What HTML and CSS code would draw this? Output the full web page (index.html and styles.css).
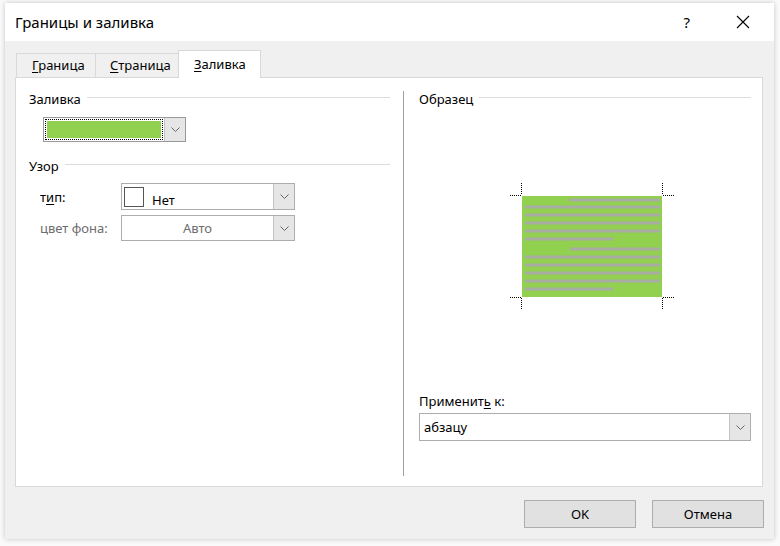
FILE: index.html
```html
<!DOCTYPE html>
<html lang="ru">
<head>
    <meta charset="UTF-8">
    <title>Границы и заливка</title>
    <link rel="stylesheet" href="styles.css">
</head>
<body>
    <div class="window">
        <div class="titlebar">
            <span class="title">Границы и заливка</span>
            <span class="help">?</span>
            <svg class="close" width="14" height="14" viewBox="0 0 14 14">
                <path d="M1 1 L13 13 M13 1 L1 13" stroke="#000" stroke-width="1.1" fill="none"/>
            </svg>
        </div>

        <div class="body">
            <div class="tabs">
                <div class="tab"><u>Г</u>раница</div>
                <div class="tab"><u>С</u>траница</div>
                <div class="tab active"><u>З</u>аливка</div>
            </div>

            <div class="panel">
                <!-- левая колонка -->
                <div class="col-left">
                    <div class="group-head"><span>Заливка</span><i></i></div>
                    <div class="combo combo-color">
                        <div class="combo-value"><div class="swatch"></div></div>
                        <div class="combo-btn">
                            <svg width="9" height="5" viewBox="0 0 9 5"><path d="M0.5 0.5 L4.5 4.5 L8.5 0.5" stroke="#666" fill="none"/></svg>
                        </div>
                    </div>

                    <div class="group-head group-pattern"><span>Узор</span><i></i></div>
                    <div class="row">
                        <label class="row-label">т<u>и</u>п:</label>
                        <div class="combo combo-type">
                            <div class="combo-value"><span class="pattern-box"></span><span>Нет</span></div>
                            <div class="combo-btn">
                                <svg width="9" height="5" viewBox="0 0 9 5"><path d="M0.5 0.5 L4.5 4.5 L8.5 0.5" stroke="#666" fill="none"/></svg>
                            </div>
                        </div>
                    </div>
                    <div class="row">
                        <label class="row-label disabled">цвет фона:</label>
                        <div class="combo combo-bg">
                            <div class="combo-value center disabled">Авто</div>
                            <div class="combo-btn">
                                <svg width="9" height="5" viewBox="0 0 9 5"><path d="M0.5 0.5 L4.5 4.5 L8.5 0.5" stroke="#666" fill="none"/></svg>
                            </div>
                        </div>
                    </div>
                </div>

                <div class="separator"></div>

                <!-- правая колонка -->
                <div class="col-right">
                    <div class="group-head"><span>Образец</span><i></i></div>
                    <div class="preview">
                        <svg width="170" height="146" viewBox="0 0 170 146">
                            <rect x="12" y="13" width="140" height="101" fill="#92d050"/>
                            <g stroke="#a8aca4" stroke-width="3">
                                <line x1="59" y1="17" x2="150" y2="17"/>
                                <line x1="15" y1="24" x2="150" y2="24"/>
                                <line x1="15" y1="32" x2="150" y2="32"/>
                                <line x1="15" y1="40" x2="150" y2="40"/>
                                <line x1="15" y1="48" x2="150" y2="48"/>
                                <line x1="15" y1="56" x2="103" y2="56"/>
                                <line x1="60" y1="66" x2="150" y2="66"/>
                                <line x1="15" y1="74" x2="150" y2="74"/>
                                <line x1="15" y1="82" x2="150" y2="82"/>
                                <line x1="15" y1="90" x2="150" y2="90"/>
                                <line x1="15" y1="98" x2="150" y2="98"/>
                                <line x1="15" y1="106" x2="103" y2="106"/>
                            </g>
                            <g stroke="#000" stroke-width="1" stroke-dasharray="1 1" fill="none">
                                <path d="M11.5 0 V12 M0 12.5 H11"/>
                                <path d="M152.5 0 V12 M153 12.5 H165"/>
                                <path d="M11.5 115 V127 M0 114.5 H11"/>
                                <path d="M152.5 115 V127 M153 114.5 H165"/>
                            </g>
                        </svg>
                    </div>
                    <div class="apply">
                        <label class="apply-label">Применит<u>ь</u> к:</label>
                        <div class="combo combo-apply">
                            <div class="combo-value">абзацу</div>
                            <div class="combo-btn">
                                <svg width="9" height="5" viewBox="0 0 9 5"><path d="M0.5 0.5 L4.5 4.5 L8.5 0.5" stroke="#666" fill="none"/></svg>
                            </div>
                        </div>
                    </div>
                </div>
            </div>

            <div class="footer">
                <button class="btn">OK</button>
                <button class="btn">Отмена</button>
            </div>
        </div>
    </div>
</body>
</html>
```

FILE: styles.css
```css
* {
    margin: 0;
    padding: 0;
    box-sizing: border-box;
}

body {
    font-family: "Noto Sans", "Open Sans", sans-serif;
    font-size: 12px;
    color: #000;
    background: #fafafa;
    width: 780px;
    height: 546px;
    overflow: hidden;
}

u {
    text-decoration-thickness: 1px;
    text-underline-offset: 2px;
}

.window {
    margin: 3px 6px 0 5px;
    width: 769px;
    height: 536px;
    background: #f0f0f0;
    box-shadow: 0 0 5px rgba(0, 0, 0, 0.22);
    display: flex;
    flex-direction: column;
}

.titlebar {
    height: 38px;
    background: #fff;
    display: flex;
    align-items: center;
    padding: 0 24px 0 10px;
}

.title {
    font-size: 15px;
    flex: 1;
}

.help {
    font-size: 15px;
    margin-right: 46px;
}

.body {
    flex: 1;
    padding: 9px 11px 0 10px;
    display: flex;
    flex-direction: column;
}

.tabs {
    display: flex;
    align-items: flex-end;
    height: 27px;
    padding-left: 1px;
}

.tab {
    height: 24px;
    padding: 0 15px;
    border: 1px solid #d9d9d9;
    border-bottom: none;
    border-right: none;
    background: #f0f0f0;
    font-size: 13px;
    line-height: 23px;
}

.tab:nth-child(1) { width: 79px; padding-left: 15px; }
.tab:nth-child(2) { width: 83px; padding-left: 14px; }

.tab.active {
    height: 28px;
    width: 83px;
    background: #fff;
    border-right: 1px solid #d9d9d9;
    line-height: 27px;
    margin-bottom: -1px;
    position: relative;
    padding-left: 15px;
}

.panel {
    height: 410px;
    background: #fff;
    border: 1px solid #d9d9d9;
    display: grid;
    grid-template-columns: 361px 1px 1fr;
    column-gap: 13px;
    padding: 13px 11px 10px 13px;
}

.panel .separator {
    background: #a0a0a0;
}

.col-right {
    margin-left: 2px;
    display: flex;
    flex-direction: column;
}

.group-head {
    display: flex;
    align-items: center;
    height: 16px;
    font-size: 13px;
}

.group-head i {
    flex: 1;
    height: 1px;
    background: #dcdcdc;
    margin: -3px 0 0 6px;
}

.combo {
    display: flex;
    background: #fff;
    border: 1px solid #adadad;
}

.combo-value {
    flex: 1;
    display: flex;
    align-items: center;
    font-size: 13px;
    padding-left: 4px;
}

.combo-value.center {
    justify-content: center;
    padding-left: 0;
}

.combo-btn {
    width: 21px;
    background: #e6e6e6;
    border-left: 1px solid #c4c4c4;
    display: flex;
    align-items: center;
    justify-content: center;
}

.combo-color {
    width: 143px;
    height: 25px;
    margin: 10px 0 0 14px;
    border-color: #999;
}

.combo-color .combo-value {
    padding: 1px;
    border: 1px dotted #000;
    margin: 1px;
}

.swatch {
    width: 100%;
    height: 100%;
    background: #92d050;
}

.group-pattern {
    margin-top: 16px;
}

.row {
    display: flex;
    align-items: center;
    margin-top: 9px;
}

.row + .row {
    margin-top: 5px;
}

.row-label {
    width: 92px;
    padding-left: 11px;
    font-size: 13px;
}

.disabled {
    color: #6d6d6d;
}

.combo-type {
    width: 174px;
    height: 27px;
}

.combo-bg {
    width: 174px;
    height: 26px;
}

.pattern-box {
    width: 20px;
    height: 20px;
    border: 1px solid #555;
    margin-right: 8px;
    margin-left: -2px;
}

.combo-type .combo-value span:last-child {
    margin-top: 6px;
}

.preview {
    flex: 1;
    padding: 76px 0 0 91px;
}

.apply {
    margin-bottom: 35px;
}

.apply-label {
    display: block;
    font-size: 13px;
    margin-bottom: 3px;
}

.combo-apply {
    height: 28px;
}

.footer {
    display: flex;
    justify-content: flex-end;
    gap: 16px;
    padding-top: 13px;
    margin-right: -1px;
}

.btn {
    width: 112px;
    height: 28px;
    background: #e1e1e1;
    border: 1px solid #adadad;
    font-family: inherit;
    font-size: 13px;
    color: #000;
}
```
